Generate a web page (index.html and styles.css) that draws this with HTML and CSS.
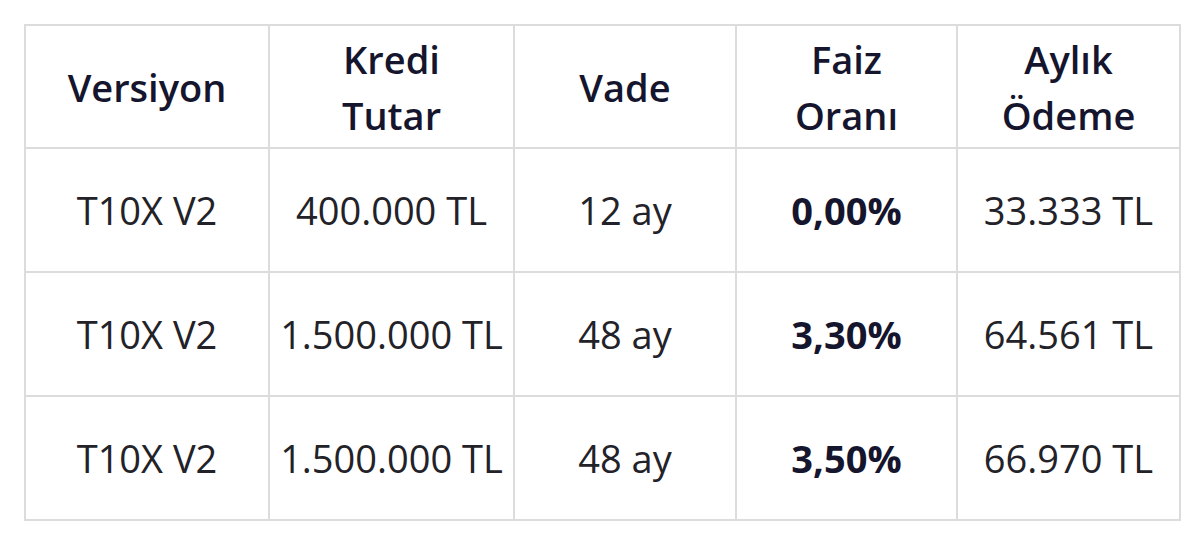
FILE: index.html
```html
<!DOCTYPE html>
<html>
<head>
<meta charset="utf-8">
<link rel="stylesheet" href="styles.css">
</head>
<body>
<table class="loan-table">
  <colgroup>
    <col class="c1"><col class="c2"><col class="c3"><col class="c4"><col class="c5">
  </colgroup>
  <thead>
    <tr>
      <th>Versiyon</th>
      <th>Kredi<br>Tutar</th>
      <th>Vade</th>
      <th>Faiz<br>Oranı</th>
      <th>Aylık<br>Ödeme</th>
    </tr>
  </thead>
  <tbody>
    <tr>
      <td>T10X V2</td>
      <td>400.000 TL</td>
      <td>12 ay</td>
      <td class="rate">0,00%</td>
      <td>33.333 TL</td>
    </tr>
    <tr>
      <td>T10X V2</td>
      <td>1.500.000 TL</td>
      <td>48 ay</td>
      <td class="rate">3,30%</td>
      <td>64.561 TL</td>
    </tr>
    <tr>
      <td>T10X V2</td>
      <td>1.500.000 TL</td>
      <td>48 ay</td>
      <td class="rate">3,50%</td>
      <td>66.970 TL</td>
    </tr>
  </tbody>
</table>
</body>
</html>
```
FILE: styles.css
```css
html, body {
  margin: 0;
  padding: 0;
  background: #ffffff;
}
body {
  padding: 24px 0 0 24px;
  font-family: "Open Sans", "Noto Sans", sans-serif;
}
.loan-table {
  border-collapse: collapse;
  table-layout: fixed;
  width: 1155px;
  border: 2px solid #dcdcdc;
}
.c1 { width: 244px; }
.c2 { width: 245px; }
.c3 { width: 222px; }
.c4 { width: 221px; }
.c5 { width: 223px; }
.loan-table th,
.loan-table td {
  border: 2px solid #dcdcdc;
  text-align: center;
  vertical-align: middle;
  padding: 0;
}
.loan-table th {
  height: 121px;
  font-size: 38px;
  line-height: 56px;
  font-weight: 600;
  color: #15152e;
}
.loan-table td {
  height: 122px;
  font-size: 38px;
  font-weight: 400;
  color: #222228;
}
.loan-table td.rate {
  font-weight: 700;
  color: #15152e;
}
```
